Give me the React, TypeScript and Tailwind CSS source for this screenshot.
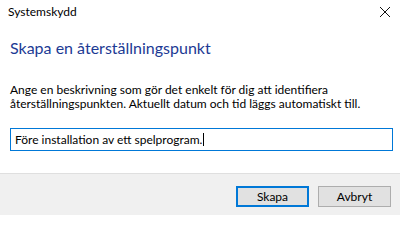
import React from 'react';

const font = { fontFamily: 'Lato, "Noto Sans", "Liberation Sans", sans-serif' };

export default function App() {
  return (
    <div className="w-[400px] h-[215px] bg-white flex flex-col text-black overflow-hidden" style={font}>
      {/* Title bar */}
      <div className="h-[24px] flex items-center justify-between pl-[8px] pr-[4px]">
        <span className="text-[12px] leading-none">Systemskydd</span>
        <svg width="12" height="12" viewBox="0 0 12 12" className="mr-[5px]">
          <path d="M1 1 L11 11 M11 1 L1 11" stroke="#111" strokeWidth="1" />
        </svg>
      </div>

      {/* Content */}
      <div className="flex-1 flex flex-col px-[10px] pt-[14px]">
        <h1 className="text-[16px] leading-[20px] text-[#1c3a94]">Skapa en återställningspunkt</h1>
        <p className="mt-[25px] text-[12px] leading-[14px]">
          Ange en beskrivning som gör det enkelt för dig att identifiera
          <br />
          återställningspunkten. Aktuellt datum och tid läggs automatiskt till.
        </p>
        <div className="mt-[17px] h-[23px] w-[383px] border border-[#0078d7] flex items-center pl-[4px]">
          <span className="text-[12px] leading-none">Före installation av ett spelprogram.</span>
          <span className="ml-[1px] w-px h-[13px] bg-black" />
        </div>
      </div>

      {/* Footer */}
      <div className="h-[42px] bg-[#f0f0f0] border-t border-[#dfdfdf] flex items-end justify-end gap-[9px] pr-[9px] pb-[8px]">
        <button className="w-[73px] h-[21px] bg-[#e1e1e1] border-2 border-[#0078d7] text-[12px] leading-none">
          Skapa
        </button>
        <button className="w-[73px] h-[21px] bg-[#e1e1e1] border border-[#adadad] text-[12px] leading-none">
          Avbryt
        </button>
      </div>
    </div>
  );
}
